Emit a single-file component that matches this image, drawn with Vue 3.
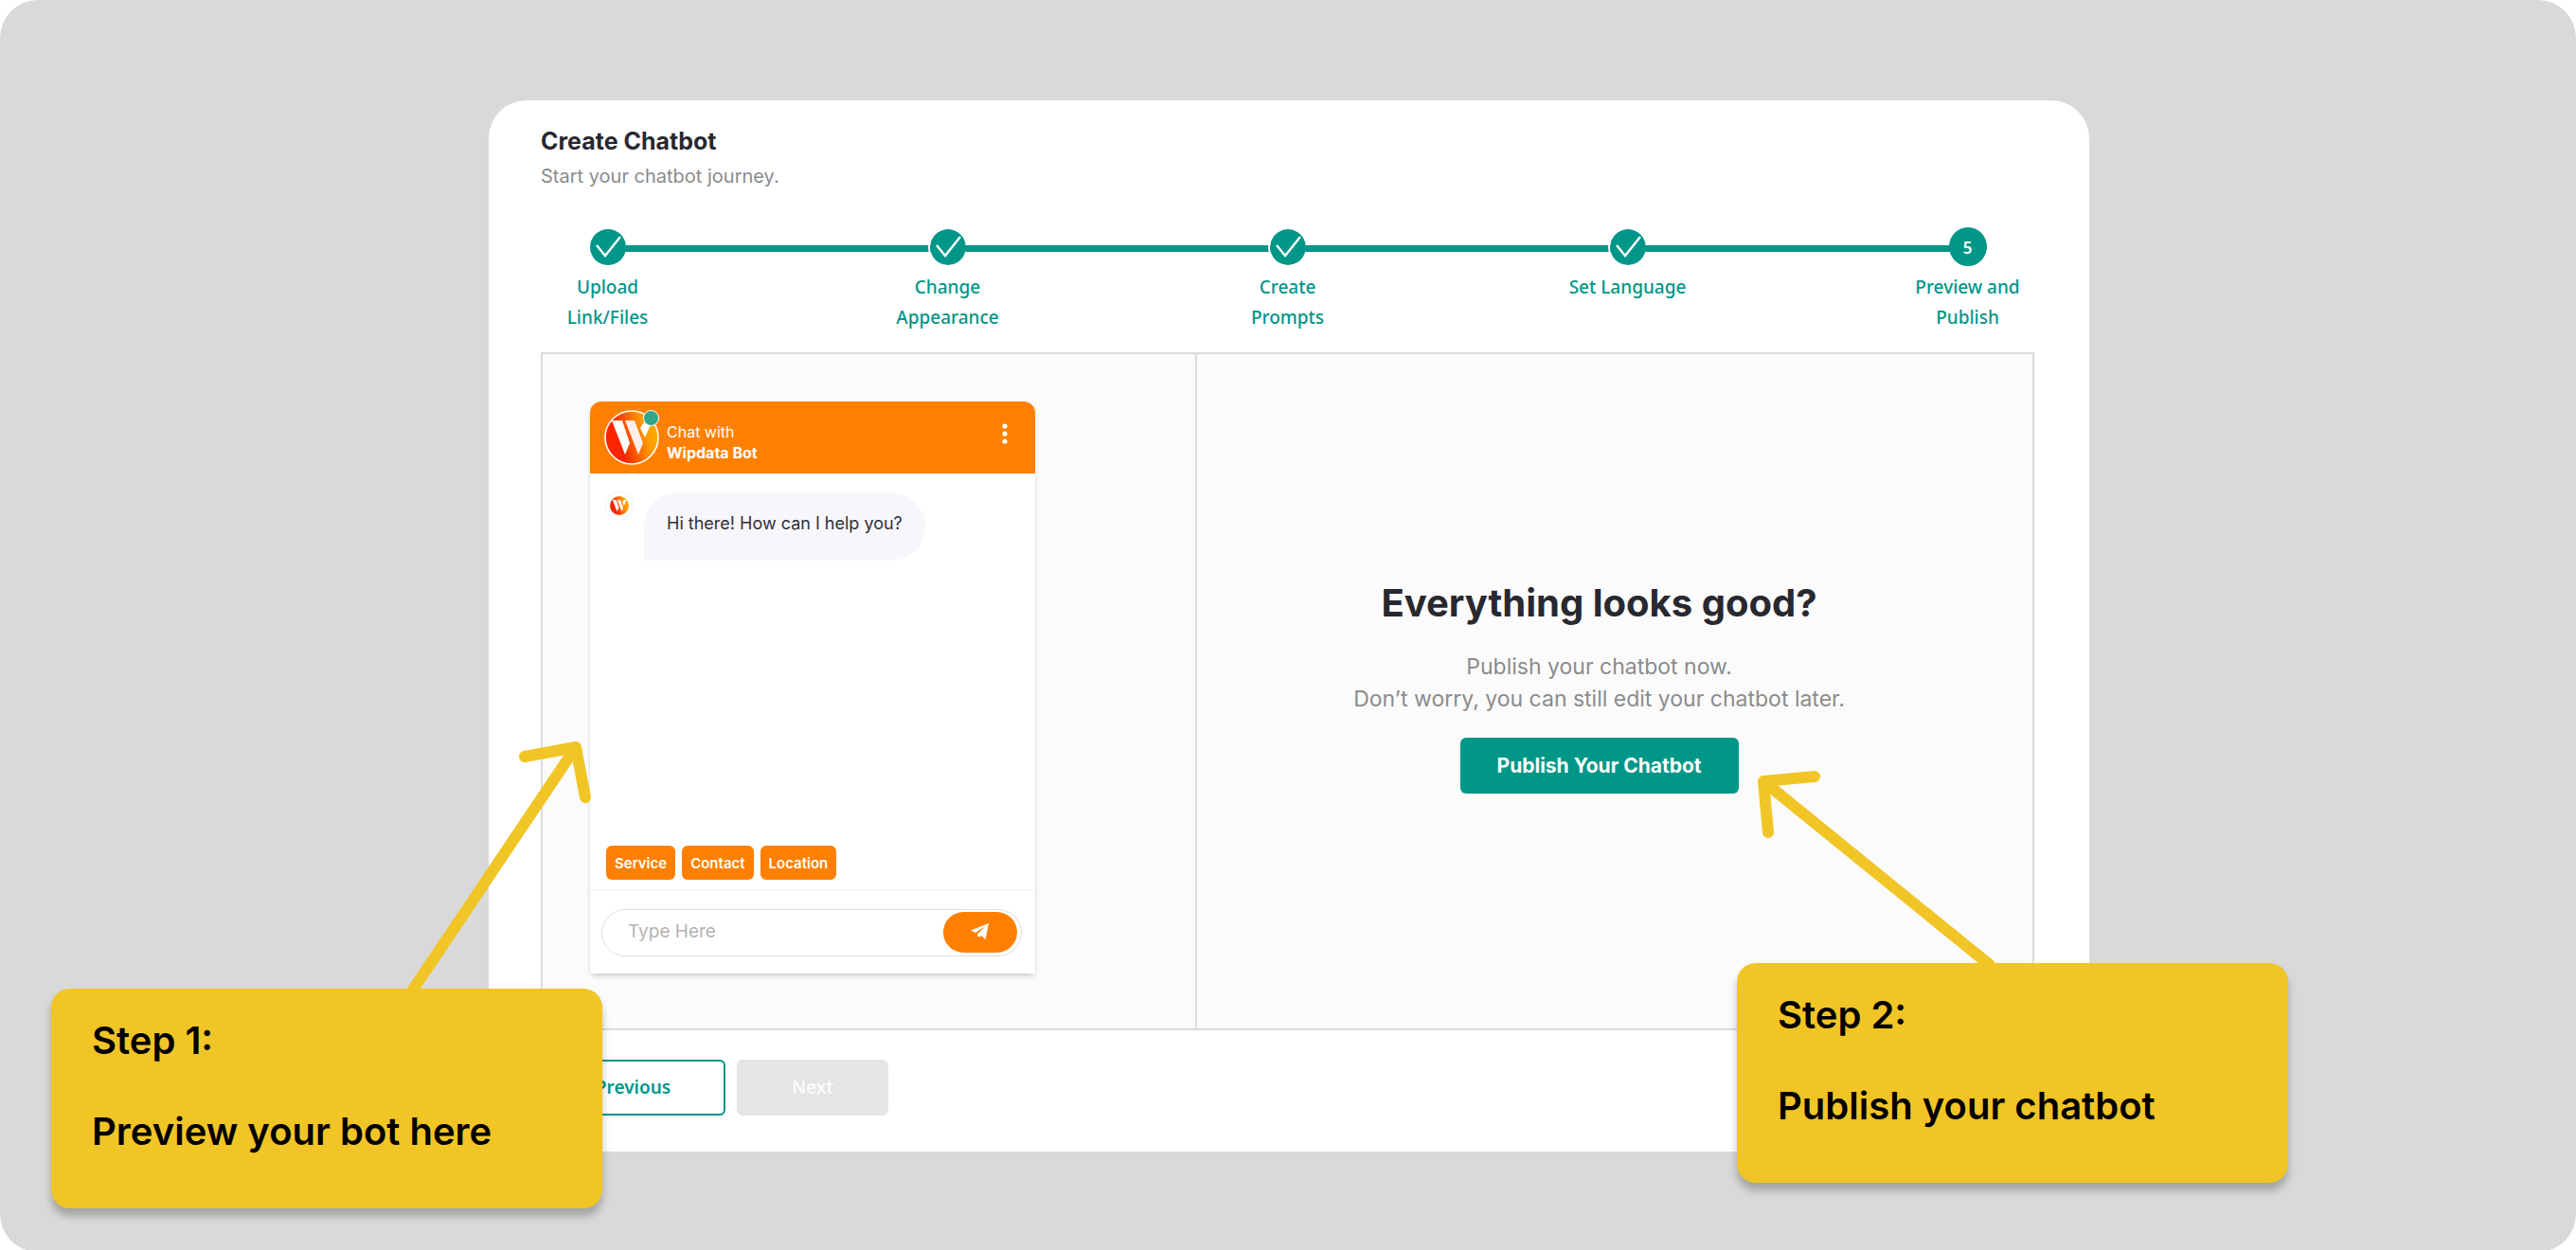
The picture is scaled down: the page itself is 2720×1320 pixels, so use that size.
<script setup>
const steps = [
  { label: ['Upload', 'Link/Files'], done: true },
  { label: ['Change', 'Appearance'], done: true },
  { label: ['Create', 'Prompts'], done: true },
  { label: ['Set Language'], done: true },
  { label: ['Preview and', 'Publish'], done: false },
]
const prompts = ['Service', 'Contact', 'Location']
</script>

<template>
  <div class="stage">
    <main class="card">
      <header class="intro">
        <h1>Create Chatbot</h1>
        <p>Start your chatbot journey.</p>
      </header>

      <ol class="stepper">
        <li v-for="(step, i) in steps" :key="i" class="step">
          <div class="marker">
            <svg v-if="step.done" class="tick" viewBox="0 0 38 38" aria-hidden="true">
              <circle cx="19" cy="19" r="19" fill="#009688" />
              <path d="M7 17l9 11L32 8" fill="none" stroke="#fff" stroke-width="2.4" />
            </svg>
            <span v-else class="number">{{ i + 1 }}</span>
          </div>
          <div class="label">
            <span v-for="line in step.label" :key="line">{{ line }}</span>
          </div>
        </li>
      </ol>

      <div class="panels">
        <section class="preview">
          <div class="chat">
            <header class="chat-head">
              <div class="avatar">
                <svg viewBox="0 0 58 58" aria-hidden="true">
                  <defs>
                    <linearGradient id="logo" x1="0" y1="0.6" x2="1" y2="0.3">
                      <stop offset="0.25" stop-color="#fa2400" />
                      <stop offset="0.75" stop-color="#fd9a00" />
                      <stop offset="1" stop-color="#fdb000" />
                    </linearGradient>
                  </defs>
                  <circle cx="29" cy="29" r="28" fill="url(#logo)" stroke="#fff" stroke-width="1.6" />
                  <path d="M8 11h11l8 24-5 12z" fill="#fff" />
                  <path d="M22 11h10l9 24-5 12z" fill="#feefec" />
                  <path d="M38 19l5-8h8l-8 18z" fill="#fff" />
                </svg>
                <i class="online"></i>
              </div>
              <p class="chat-title"><span>Chat with</span><strong>Wipdata Bot</strong></p>
              <button class="menu" type="button" aria-label="Menu">
                <svg viewBox="0 0 6 22" aria-hidden="true" fill="#fff">
                  <circle cx="3" cy="3" r="2.6" /><circle cx="3" cy="11" r="2.6" /><circle cx="3" cy="19" r="2.6" />
                </svg>
              </button>
            </header>
            <div class="messages">
              <div class="mini">
                <svg viewBox="0 0 58 58" aria-hidden="true">
                  <circle cx="29" cy="29" r="29" fill="url(#logo)" />
                  <path d="M8 11h11l8 24-5 12z" fill="#fff" />
                  <path d="M22 11h10l9 24-5 12z" fill="#feefec" />
                  <path d="M38 19l5-8h8l-8 18z" fill="#fff" />
                </svg>
              </div>
              <p class="bubble">Hi there! How can I help you?</p>
            </div>
            <div class="prompts">
              <button v-for="p in prompts" :key="p" type="button">{{ p }}</button>
            </div>
            <form class="composer" @submit.prevent>
              <div class="field">
                <input type="text" placeholder="Type Here" aria-label="Message" />
                <button type="submit" aria-label="Send">
                  <svg viewBox="0 0 20 18" aria-hidden="true" fill="#fff">
                    <path d="M19 0L0 7.500l5 2.600L15.500 3 7 11.400V13l2.500 1.500L11 13l4.500 4z" />
                  </svg>
                </button>
              </div>
            </form>
          </div>
        </section>

        <section class="publish">
          <h2>Everything looks good?</h2>
          <p>Publish your chatbot now.<br />Don’t worry, you can still edit your chatbot later.</p>
          <button type="button">Publish Your Chatbot</button>
        </section>
      </div>

      <footer class="actions">
        <button class="previous" type="button">Previous</button>
        <button class="next" type="button" disabled>Next</button>
      </footer>
    </main>

    <aside class="note first">
      <svg class="arrow" viewBox="0 0 190 270" aria-hidden="true">
        <path d="M2 270L178 8M124 18L178 8L188 61" />
      </svg>
      <p>Step 1:</p>
      <p>Preview your bot here</p>
    </aside>
    <aside class="note second">
      <svg class="arrow" viewBox="0 0 250 208" aria-hidden="true">
        <path d="M247 208L8 14M62 9L8 14L13 68" />
      </svg>
      <p>Step 2:</p>
      <p>Publish your chatbot</p>
    </aside>
  </div>
</template>

<style>
body {
  margin: 0;
  background: #fff;
}
</style>

<style scoped>
* {
  box-sizing: border-box;
}
h1, h2, p, ol {
  margin: 0;
  padding: 0;
}
button {
  font-family: inherit;
  padding: 0;
  border: 0;
  cursor: pointer;
}
svg {
  display: block;
}
.stage {
  position: relative;
  padding: 106px 514px 106px 516px;
  background: #d9d9d9;
  border-radius: 40px;
  font-family: Inter, "Liberation Sans", sans-serif;
}
.card {
  padding: 28px 58px 38px 55px;
  background: #fff;
  border-radius: 40px 40px 0 0;
}
.intro h1 {
  font-size: 25px;
  line-height: 30px;
  font-weight: 700;
  color: #28282f;
}
.intro p {
  margin-top: 8px;
  font-size: 20px;
  line-height: 28px;
  color: #8b8b8b;
}
.stepper {
  display: flex;
  min-height: 132px;
  margin-top: 40px;
  list-style: none;
}
.step {
  position: relative;
  flex: 1 1 0;
  color: #009688;
}
.step:last-child {
  flex: none;
}
.marker {
  display: flex;
  align-items: center;
  justify-content: center;
  width: 141px;
  height: 41px;
}
.step:not(:last-child)::before {
  content: "";
  position: absolute;
  top: 19px;
  left: 88px;
  right: -53px;
  height: 7px;
  background: #009688;
}
.tick {
  position: relative;
  width: 38px;
  height: 38px;
}
.step:not(:first-child) .tick {
  border-radius: 50%;
  box-shadow: -1px 0 0 1px #fff;
}
.number {
  position: relative;
  width: 40px;
  height: 41px;
  border-radius: 50%;
  background: #009688;
  color: #fff;
  font: 600 17px/44px "Noto Sans", sans-serif;
  text-align: center;
}
.label {
  display: flex;
  flex-direction: column;
  align-items: center;
  width: 141px;
  margin-top: 6px;
  font: 500 19px/32px "Noto Sans", sans-serif;
  white-space: nowrap;
}
.panels {
  display: grid;
  grid-template-columns: 692fr 883fr;
  border: 2px solid #dcdcdc;
  background: #fbfbfb;
}
.preview {
  padding: 50px;
  border-right: 2px solid #dcdcdc;
}
.chat {
  display: flex;
  flex-direction: column;
  max-width: 470px;
  min-height: 604px;
  margin-bottom: 8px;
  background: #fff;
  border-radius: 12px 12px 0 0;
  box-shadow: 0 4px 6px -2px rgba(0, 0, 0, 0.2), 0 0 4px rgba(0, 0, 0, 0.06);
}
.chat-head {
  display: flex;
  align-items: flex-start;
  height: 76px;
  padding: 9px 29px 9px 15px;
  background: #ff8000;
  border-radius: 12px 12px 0 0;
  color: #fff;
}
.avatar {
  position: relative;
  width: 58px;
}
.online {
  position: absolute;
  top: 0;
  right: 0;
  width: 17px;
  height: 17px;
  border: 1px solid #fff;
  border-radius: 50%;
  background: #33a58a;
}
.chat-title {
  flex: 1;
  display: flex;
  flex-direction: column;
  margin: 12px 0 0 8px;
  font-size: 16px;
  line-height: 22px;
}
.chat-title strong {
  font-weight: 700;
}
.menu {
  width: 6px;
  margin-top: 14px;
  background: none;
}
.messages {
  flex: 1;
  display: flex;
  align-items: flex-start;
  gap: 12px;
  padding: 20px 17px;
}
.mini {
  width: 28px;
  padding: 4px;
  border-radius: 50%;
  background: #fff;
  box-shadow: 0 0 4px rgba(0, 0, 0, 0.08);
}
.bubble {
  padding: 21px 24px 27px;
  border-radius: 36px 36px 36px 0;
  background: #f7f7fb;
  color: #2f2f38;
  font-size: 18px;
  line-height: 24px;
}
.prompts {
  display: flex;
  gap: 7px;
  padding: 0 17px 10px;
}
.prompts button {
  height: 36px;
  padding: 0 9px;
  border-radius: 6px;
  background: #ff8000;
  color: #fff;
  font-size: 15px;
  font-weight: 600;
}
.composer {
  padding: 19px 14px 18px 12px;
  border-top: 2px solid #f7f7f7;
}
.field {
  display: flex;
  align-items: center;
  height: 50px;
  padding: 0 4px 2px 27px;
  border: 1px solid #dedede;
  border-radius: 25px;
}
.field input {
  flex: 1;
  min-width: 0;
  padding: 0;
  border: 0;
  outline: 0;
  background: none;
  font: 400 19px/30px Inter, sans-serif;
}
.field input::placeholder {
  color: #b3b3b3;
}
.field button {
  display: flex;
  align-items: center;
  justify-content: center;
  width: 78px;
  height: 43px;
  border-radius: 22px;
  background: #ff8000;
}
.field button svg {
  width: 20px;
}
.publish {
  display: flex;
  flex-direction: column;
  align-items: center;
  justify-content: center;
  padding: 0 33px 10px 0;
  text-align: center;
}
.publish h2 {
  font-size: 40px;
  line-height: 48px;
  font-weight: 700;
  color: #28282f;
}
.publish p {
  margin-top: 26px;
  font-size: 23px;
  line-height: 34px;
  color: #8b8b8b;
}
.publish button {
  width: 294px;
  height: 59px;
  margin-top: 24px;
  border-radius: 6px;
  background: #009688;
  color: #fff;
  font-size: 21px;
  font-weight: 700;
}
.actions {
  display: flex;
  gap: 12px;
  margin-top: 31px;
}
.actions button {
  height: 59px;
  border-radius: 6px;
  font: 600 19px/27px "Noto Sans", sans-serif;
}
.actions .previous {
  width: 195px;
  border: 2px solid #009688;
  background: #fff;
  color: #009688;
}
.actions .next {
  width: 160px;
  background: #e5e5e5;
  color: #fbfbfb;
}
.note {
  position: absolute;
  width: 582px;
  padding: 31px 43px 57px;
  border-radius: 20px;
  background: #f1c526;
  box-shadow: 0 8px 8px rgba(0, 0, 0, 0.25);
  color: #000;
  font-size: 40px;
  font-weight: 600;
  line-height: 48px;
}
.note p + p {
  margin-top: 48px;
}
.first {
  left: 54px;
  bottom: 46px;
}
.second {
  left: 1834px;
  bottom: 73px;
}
.arrow {
  position: absolute;
  overflow: visible;
  fill: none;
  stroke: #f1c526;
  stroke-width: 12px;
  stroke-linecap: round;
  stroke-linejoin: round;
}
.first .arrow {
  left: 376px;
  top: -263px;
  width: 190px;
  height: 270px;
}
.second .arrow {
  left: 20px;
  top: -206px;
  width: 250px;
  height: 208px;
}
</style>
